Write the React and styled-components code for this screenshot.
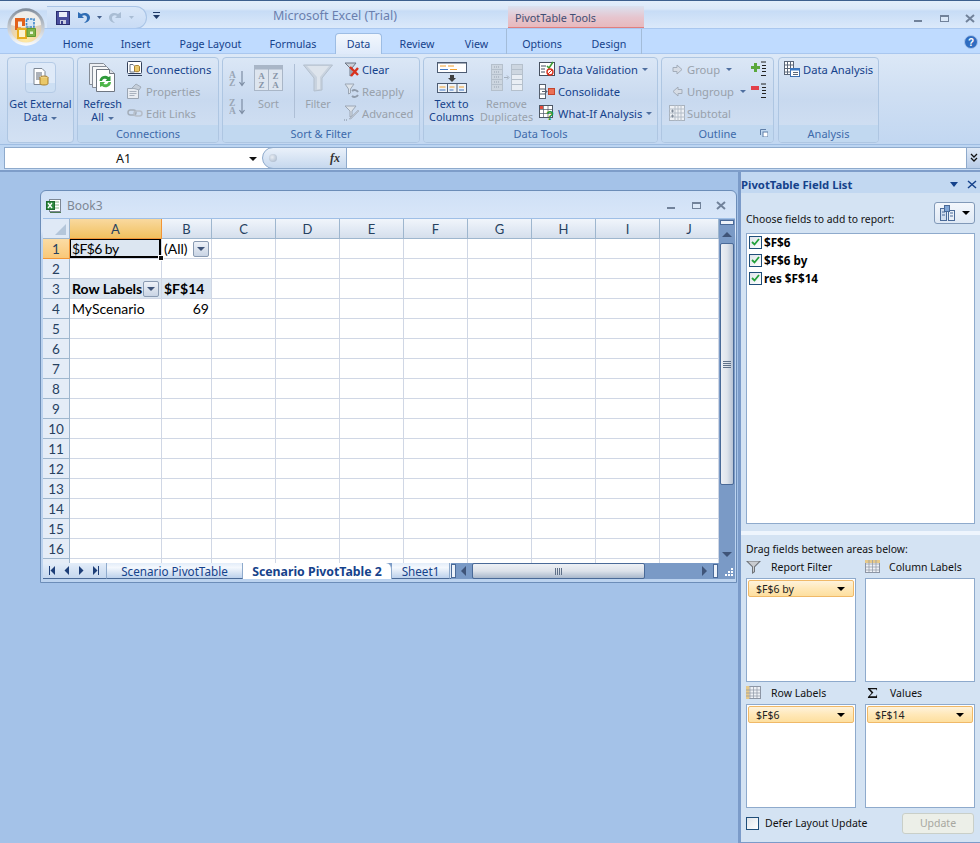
import React from "react";
import styled, { createGlobalStyle } from "styled-components";

const UI_FONT = `"Noto Sans", "Open Sans", sans-serif`;
const SHEET_FONT = `Lato, "Open Sans", sans-serif`;

const GlobalStyle = createGlobalStyle`
  html, body { margin: 0; padding: 0; height: 100%; overflow: hidden; }
  body { background: #a4c2e8; font-family: ${UI_FONT}; }
  * { box-sizing: border-box; }
`;

const Page = styled.div`
  width: 980px;
  height: 843px;
  position: relative;
  display: flex;
  flex-direction: column;
  overflow: hidden;
`;

/* title bar */
const TitleBar = styled.div`
  height: 28px;
  flex: none;
  display: flex;
  background: linear-gradient(#e3eefb 0, #dbe8f9 8px, #c7dcf6 10px, #dbe9fa 100%);
  border-top: 1px solid #3d5f8e;
`;
const Quick = styled.div`
  margin: 5px 0 0 47px;
  width: 100px;
  height: 23px;
  padding-left: 9px;
  display: flex;
  align-items: center;
  gap: 7px;
  border-radius: 0 12px 12px 0;
  background: linear-gradient(#d8e6f8, #c9dcf5);
  border: 1px solid #a9c4e6;
  border-left: none;
`;
const Customize = styled.div`
  margin: 11px 0 0 6px;
  width: 9px;
  height: 8px;
  display: flex;
`;
const AppTitle = styled.div`
  margin: 5px 0 0 111px;
  width: 235px;
  font-size: 12.5px;
  line-height: 20px;
  color: #6a7fae;
`;
const ContextTitle = styled.div`
  width: 136px;
  height: 23px;
  margin-top: 5px;
  padding: 4px 0 0 7px;
  font-size: 10.8px;
  line-height: 16px;
  color: #3f4f74;
  background: linear-gradient(#dbe2f0, #e6c5ce 55%, #e8b9bd);
  border-bottom: 2px solid #e07f7f;
`;
const WindowButtons = styled.div`
  margin-left: auto;
  padding: 12px 4px 0 0;
  display: flex;
  gap: 13px;
  align-items: flex-start;
`;

/* tabs */
const TabRow = styled.div`
  height: 26px;
  flex: none;
  display: flex;
  padding-left: 50px;
  background: #bfdbff;
  border-top: 1px solid #a9c7ef;
  border-bottom: 1px solid #a9c7ef;
  position: relative;
`;
const Tab = styled.div`
  width: ${(p) => p.$w}px;
  margin-left: ${(p) => p.$ml || 0}px;
  margin-bottom: -1px;
  text-align: center;
  font-size: 10.7px;
  line-height: 30px;
  color: #15428b;
  ${(p) => p.$active && `
    margin-top: 4px;
    line-height: 20px;
    background: linear-gradient(#f2f7fd, #dfeafa);
    border: 1px solid #9dbde4;
    border-bottom: none;
    border-radius: 4px 4px 0 0;
  `}
  ${(p) => p.$context && `
    border-left: ${p.$context === "l" ? "1px solid #a3bcd9" : "none"};
    border-right: ${p.$context === "r" ? "1px solid #a3bcd9" : "none"};
  `}
`;
const HelpSlot = styled.div`
  margin-left: auto;
  padding: 6px 2px 0 0;
  height: 20px;
  display: flex;
`;

/* ribbon */
const Ribbon = styled.div`
  height: 91px;
  flex: none;
  display: flex;
  padding: 3px 0 1px 6px;
  gap: 3px;
  background: linear-gradient(#dce8f7, #cfdff3 45%, #c2d7f1);
  border-bottom: 1px solid #9fbde2;
`;
const Group = styled.div`
  width: ${(p) => p.$w}px;
  margin-left: ${(p) => p.$ml || 0}px;
  display: flex;
  flex-direction: column;
  border: 1px solid #aec6e2;
  border-radius: 4px;
  overflow: hidden;
  background: linear-gradient(#dbe7f6, #c8d9ef 50%, #d3e1f3);
`;
const GroupBody = styled.div`
  flex: 1;
  display: flex;
  min-height: 0;
`;
const GroupLabel = styled.div`
  height: 17px;
  flex: none;
  position: relative;
  text-align: center;
  font-size: 11px;
  line-height: 18px;
  color: #3e6aaa;
  background: #c1d8f0;
`;
const Launcher = styled.span`
  position: absolute;
  right: 5px;
  top: 4px;
  display: flex;
`;
const BigButton = styled.div`
  width: ${(p) => p.$w}px;
  margin-left: ${(p) => p.$ml || 0}px;
  display: flex;
  flex-direction: column;
  align-items: center;
  font-size: 10.8px;
  line-height: 13px;
  text-align: center;
  white-space: nowrap;
  color: ${(p) => (p.$off ? "#98a1ab" : "#15428b")};
`;
const BigIcon = styled.div`
  height: 33px;
  margin-top: 3px;
  margin-bottom: 3px;
  display: flex;
  align-items: center;
  justify-content: center;
`;
const ExternalIcon = styled.div`
  width: 31px;
  height: 31px;
  margin: 4px 0 4px;
  display: flex;
  align-items: flex-start;
  justify-content: center;
  padding-top: 5px;
  border: 1px solid #b5cbe6;
  border-radius: 4px;
  background: linear-gradient(#dfeaf8 70%, #cddff3 70%);
`;
const SmallColumn = styled.div`
  margin-left: ${(p) => p.$ml || 0}px;
  ${(p) => p.$w && `width: ${p.$w}px;`}
  display: flex;
  flex-direction: column;
`;
const SmallButton = styled.div`
  height: 22px;
  flex: none;
  display: flex;
  align-items: center;
  gap: ${(p) => p.$gap ?? 3}px;
  font-size: 11.2px;
  white-space: nowrap;
  color: ${(p) => (p.$off ? "#98a1ab" : "#15428b")};
`;
const IconBox = styled.span`
  width: 16px;
  height: 16px;
  flex: none;
  display: flex;
  align-items: center;
  justify-content: center;
`;
const Caret = styled.span`
  display: inline-block;
  margin-left: ${(p) => p.$ml ?? 4}px;
  vertical-align: middle;
  border-left: 3px solid transparent;
  border-right: 3px solid transparent;
  border-top: 3px solid ${(p) => p.$color || "#4f6f9f"};
`;
const RibbonDivider = styled.div`
  width: 1px;
  height: 54px;
  margin: 6px 0 0 9px;
  background: #aebfd6;
`;
const SortColumn = styled.div`
  width: 23px;
  margin-left: 6px;
  padding-top: 12px;
  display: flex;
  flex-direction: column;
  gap: 11px;
`;

/* formula bar */
const FormulaStrip = styled.div`
  height: 27px;
  flex: none;
  padding: 2px 0 0 4px;
  background: linear-gradient(#bcd5f2, #c6dbf4);
  border-bottom: 2px solid #7e9dc9;
`;
const FormulaRow = styled.div`
  height: 22px;
  display: flex;
  background: #fff;
  border: 1px solid #8eaacc;
  border-right: none;
`;
const NameBox = styled.div`
  width: 257px;
  display: flex;
  align-items: center;
  position: relative;
  padding-left: 111px;
  font-size: 12.5px;
  color: #111;
`;
const NameArrow = styled.span`
  position: absolute;
  right: 5px;
  top: 9px;
  border-left: 4px solid transparent;
  border-right: 4px solid transparent;
  border-top: 4px solid #111;
`;
const FxBox = styled.div`
  width: 85px;
  margin-top: -1px;
  margin-bottom: -1px;
  display: flex;
  align-items: center;
  justify-content: flex-end;
  padding-right: 6px;
  border: 1px solid #8eaacc;
  border-radius: 11px 0 0 11px;
  background: linear-gradient(#eaf1fa, #c6d8ee);
  font-family: "Liberation Serif", serif;
  font-style: italic;
  font-weight: 700;
  font-size: 12px;
  color: #333;
  position: relative;
`;
const FxDot = styled.span`
  position: absolute;
  left: 6px;
  top: 6px;
  width: 8px;
  height: 8px;
  border-radius: 50%;
  background: radial-gradient(circle at 40% 40%, #e8edf3, #9fb0c6);
`;
const FormulaInput = styled.div`
  flex: 1;
`;
const ExpandButton = styled.div`
  width: 14px;
  display: flex;
  align-items: center;
  justify-content: center;
  background: linear-gradient(#dfe9f6, #b9cde8);
  border-left: 1px solid #8eaacc;
`;

/* workspace */
const Workspace = styled.div`
  flex: 1;
  display: flex;
  min-height: 0;
`;
const Desktop = styled.div`
  width: 738px;
  flex: none;
  padding: 18px 1px 0 40px;
  background: #a4c2e8;
`;
const BookWindow = styled.div`
  width: 697px;
  height: 393px;
  padding: 0 1px 3px 2px;
  display: flex;
  flex-direction: column;
  border: 1px solid #6c8db8;
  border-radius: 6px 6px 0 0;
  background: linear-gradient(#cfe0f6, #dde9f9 40px, #bcd3ef 50px);
`;
const BookTitle = styled.div`
  height: 27px;
  flex: none;
  display: flex;
  align-items: center;
  gap: 5px;
  padding: 2px 8px 0 3px;
  font-size: 12px;
  color: #7d8794;
`;
const BookButtons = styled.div`
  margin-left: auto;
  display: flex;
  gap: 12px;
  align-items: center;
`;
const BookBody = styled.div`
  flex: 1;
  display: flex;
  flex-direction: column;
  min-height: 0;
  background: #fff;
  border-top: 1px solid #9fbfe6;
`;
const BookMain = styled.div`
  flex: 1;
  display: flex;
  min-height: 0;
`;
const Sheet = styled.div`
  width: 676px;
  flex: none;
  height: 100%;
  overflow: hidden;
  display: grid;
  grid-template-columns: 27px 92px 50px repeat(7, 64px) 59px;
  grid-auto-rows: 20px;
`;
const Corner = styled.div`
  display: flex;
  align-items: flex-end;
  justify-content: flex-end;
  padding: 0 3px 3px 0;
  background: #dfe9f6;
  border: 1px solid #9eb6ce;
  border-width: 0 1px 1px 0;
`;
const ColHead = styled.div`
  display: flex;
  align-items: center;
  justify-content: center;
  font-family: ${SHEET_FONT};
  font-size: 13px;
  color: #27415f;
  background: ${(p) => (p.$on ? "linear-gradient(#f9d99f, #f1c15f)" : "linear-gradient(#f1f5fb, #e0e8f3 60%, #d5dfec)")};
  border-right: 1px solid ${(p) => (p.$on ? "#f29536" : "#9eb6ce")};
  border-bottom: 1px solid ${(p) => (p.$on ? "#f29536" : "#9eb6ce")};
`;
const RowHead = styled.div`
  display: flex;
  align-items: center;
  justify-content: center;
  font-family: ${SHEET_FONT};
  font-size: 13.5px;
  color: #27415f;
  background: ${(p) => (p.$on ? "linear-gradient(#fbdca5, #f9c878)" : "#e4ecf7")};
  border-right: 1px solid ${(p) => (p.$on ? "#f29536" : "#9eb6ce")};
  border-bottom: 1px solid ${(p) => (p.$on ? "#f29536" : "#9eb6ce")};
`;
const Cell = styled.div`
  position: relative;
  display: flex;
  align-items: center;
  justify-content: ${(p) => (p.$right ? "flex-end" : "space-between")};
  padding: 0 2px;
  font-family: ${SHEET_FONT};
  font-size: 14px;
  font-weight: ${(p) => (p.$bold ? 700 : 400)};
  color: #000;
  white-space: nowrap;
  background: ${(p) => (p.$fill ? "#dce6f1" : "#fff")};
  border-right: 1px solid #d0d7e5;
  border-bottom: 1px solid #d0d7e5;
  ${(p) => p.$selected && `
    letter-spacing: -0.6px;
    box-shadow: inset 0 0 0 1px #000, inset -1px -1px 0 1px #000;
    overflow: visible;
  `}
`;
const FillHandle = styled.span`
  position: absolute;
  right: -3px;
  bottom: -3px;
  width: 6px;
  height: 6px;
  background: #111;
  border: 1px solid #fff;
  z-index: 2;
`;
const PivotDrop = styled.span`
  width: 16px;
  height: 16px;
  margin-left: ${(p) => p.$ml || 0}px;
  flex: none;
  display: flex;
  align-items: center;
  justify-content: center;
  border: 1px solid #8a9bb2;
  border-radius: 2px;
  background: linear-gradient(#eef2f8, #c9d4e4);
`;
const DropCaret = styled.span`
  border-left: 4px solid transparent;
  border-right: 4px solid transparent;
  border-top: 4px solid #3f5478;
`;
const VScroll = styled.div`
  width: 16px;
  flex: none;
  display: flex;
  flex-direction: column;
  align-items: center;
  background: #7a9ac6;
`;
const SplitH = styled.div`
  width: 14px;
  height: 5px;
  margin-top: 1px;
  background: #eef3fa;
  border: 1px solid #4a6a98;
`;
const ArrowUp = styled.span`
  margin: 7px 0 6px;
  border-left: 5px solid transparent;
  border-right: 5px solid transparent;
  border-bottom: 5px solid #3f5478;
`;
const ArrowDown = styled.span`
  margin-top: auto;
  margin-bottom: 6px;
  border-left: 5px solid transparent;
  border-right: 5px solid transparent;
  border-top: 5px solid #3f5478;
`;
const VThumb = styled.div`
  width: 14px;
  height: 242px;
  display: flex;
  align-items: center;
  justify-content: center;
  border: 1px solid #4a6a98;
  border-radius: 2px;
  background: linear-gradient(90deg, #eceff4, #dfe4ec 50%, #b5c2d4);
`;
const VGrip = styled.span`
  width: 8px;
  height: 7px;
  background: repeating-linear-gradient(#5f7088 0 1px, transparent 1px 2px);
`;
const BottomBar = styled.div`
  height: 16px;
  flex: none;
  display: flex;
  align-items: stretch;
  background: #7a9ac6;
`;
const SheetNav = styled.div`
  width: 64px;
  flex: none;
  display: flex;
  align-items: center;
  justify-content: space-around;
  padding: 0 3px 0 2px;
  background: linear-gradient(#e3edf9, #c5d7ee);
  border-right: 1px solid #8eaacc;
  border-bottom: 1px solid #4a6a98;
`;
const SheetTab = styled.div`
  width: ${(p) => p.$w}px;
  flex: none;
  text-align: center;
  font-size: ${(p) => (p.$active ? 12.3 : 11.7)}px;
  line-height: ${(p) => (p.$active ? 18 : 16)}px;
  font-weight: ${(p) => (p.$active ? 700 : 400)};
  color: #15428b;
  white-space: nowrap;
  background: ${(p) => (p.$active ? "#fff" : "linear-gradient(#e3edf9, #f4f8fd 30%, #bcd1ec)")};
  border-right: 1px solid #8eaacc;
  border-bottom: ${(p) => (p.$active ? "none" : "1px solid #4a6a98")};
  ${(p) => p.$active && "border-radius: 0 6px 0 0;"}
`;
const TabSpacer = styled.div`
  width: 1px;
  flex: none;
  border-bottom: 1px solid #4a6a98;
  background: #dfe9f6;
`;
const SplitV = styled.div`
  width: 5px;
  flex: none;
  margin: 1px 0 1px;
  background: #eef3fa;
  border: 1px solid #4a6a98;
`;
const HArrow = styled.span`
  align-self: center;
  margin: ${(p) => p.$m};
  border-top: 5px solid transparent;
  border-bottom: 5px solid transparent;
  ${(p) => (p.$left ? "border-right: 5px solid #3f5478;" : "border-left: 5px solid #3f5478;")}
`;
const HThumb = styled.div`
  width: 173px;
  flex: none;
  display: flex;
  align-items: center;
  justify-content: center;
  border: 1px solid #4a6a98;
  border-radius: 2px;
  background: linear-gradient(#eef1f5, #dde2ea 50%, #a9b8cc);
`;
const HGrip = styled.span`
  width: 7px;
  height: 7px;
  background: repeating-linear-gradient(90deg, #5f7088 0 1px, transparent 1px 2px);
`;
const ResizeGrip = styled.div`
  width: 14px;
  flex: none;
  margin-left: 3px;
  display: flex;
  align-items: flex-end;
`;

/* field list */
const Panel = styled.div`
  flex: 1;
  display: flex;
  flex-direction: column;
  background: #d4e3f3;
  border-left: 3px solid #7b9bc9;
  border-bottom: 1px solid #7b9bc9;
`;
const PanelHeader = styled.div`
  height: 21px;
  flex: none;
  display: flex;
  align-items: center;
  justify-content: space-between;
  padding: 3px 3px 0 0;
  font-size: 11.3px;
  font-weight: 700;
  color: #15428b;
  background: #c2d8f1;
`;
const PanelHeaderIcons = styled.span`
  display: flex;
  align-items: center;
  gap: 9px;
`;
const PanelArrow = styled.span`
  border-left: 4px solid transparent;
  border-right: 4px solid transparent;
  border-top: 5px solid #15428b;
`;
const ChooseRow = styled.div`
  height: 22px;
  margin: 9px 6px 0 5px;
  display: flex;
  align-items: center;
  justify-content: space-between;
  font-size: 10.4px;
  color: #111;
`;
const ChooseText = styled.span`
  padding-top: 11px;
`;
const LayoutButton = styled.div`
  width: 41px;
  height: 22px;
  display: flex;
  align-items: center;
  justify-content: center;
  gap: 7px;
  border: 1px solid #8199b8;
  border-radius: 3px;
  background: linear-gradient(#f3f7fc, #dfe9f5);
`;
const BlackCaret = styled.span`
  flex: none;
  border-left: 4px solid transparent;
  border-right: 4px solid transparent;
  border-top: 4px solid #000;
`;
const FieldBox = styled.div`
  height: 291px;
  margin: 9px 6px 0 5px;
  padding: 0 2px;
  display: flex;
  flex-direction: column;
  gap: 2px;
  background: #fff;
  border: 1px solid #8eaacc;
`;
const FieldRow = styled.div`
  height: 16px;
  flex: none;
  display: flex;
  align-items: center;
  gap: 2px;
  font-size: 11.7px;
  font-weight: 700;
  color: #000;
`;
const CheckBox = styled.span`
  width: 13px;
  height: 13px;
  flex: none;
  display: flex;
  align-items: center;
  justify-content: center;
  background: linear-gradient(135deg, #dfe4ea, #fff);
  border: 1px solid #1f4e79;
`;
const Splitter = styled.div`
  height: 4px;
  margin-top: 7px;
  background: #eef5fd;
`;
const DragText = styled.div`
  margin: 7px 0 0 5px;
  height: 16px;
  font-size: 10.4px;
  line-height: 15px;
  color: #111;
`;
const Areas = styled.div`
  margin: 0 6px 0 5px;
  display: grid;
  grid-template-columns: 110px 110px;
  column-gap: 9px;
`;
const AreaLabel = styled.div`
  height: 20px;
  padding-bottom: 3px;
  display: flex;
  align-items: center;
  gap: ${(p) => p.$gap}px;
  font-size: 10.5px;
  color: #111;
`;
const AreaIcon = styled.span`
  width: 15px;
  flex: none;
  display: flex;
  justify-content: center;
`;
const AreaBox = styled.div`
  height: 104px;
  padding: 1px 1px;
  margin-bottom: 2px;
  background: #fff;
  border: 1px solid #8eaacc;
`;
const Pill = styled.div`
  height: 17px;
  display: flex;
  align-items: center;
  justify-content: space-between;
  padding: 0 8px 0 7px;
  font-size: 10.5px;
  color: #222;
  background: linear-gradient(#fef3dc, #ffe8b8 50%, #fddf9f);
  border: 1px solid #f0b968;
  border-radius: 2px;
`;
const PanelFooter = styled.div`
  margin: 1px 7px 0 5px;
  display: flex;
  align-items: center;
  justify-content: space-between;
  height: 24px;
`;
const DeferLabel = styled.label`
  display: flex;
  align-items: center;
  gap: 6px;
  font-size: 10.5px;
  color: #111;
`;
const DeferBox = styled.span`
  width: 13px;
  height: 13px;
  background: linear-gradient(135deg, #dfe4ea, #fff);
  border: 1px solid #1f4e79;
`;
const UpdateButton = styled.div`
  width: 72px;
  height: 21px;
  text-align: center;
  font-size: 10.5px;
  line-height: 19px;
  color: #a7a7a0;
  background: #ecefe8;
  border: 1px solid #c9cfc8;
  border-radius: 3px;
`;

/* drawings */
const Orb = styled.div`
  position: absolute;
  left: 7px;
  top: 8px;
  width: 38px;
  height: 38px;
  z-index: 5;
`;
const OfficeOrb = () => (
  <svg width="38" height="38" viewBox="0 0 38 38">
    <defs>
      <radialGradient id="orbGlow" cx="50%" cy="90%" r="65%">
        <stop offset="0" stopColor="#ffe9a0" />
        <stop offset="0.55" stopColor="#f3d9a8" />
        <stop offset="1" stopColor="#d5cdc2" />
      </radialGradient>
      <linearGradient id="orbRing" x1="0" y1="0" x2="0" y2="1">
        <stop offset="0" stopColor="#7f8b9a" />
        <stop offset="0.5" stopColor="#c3c9d0" />
        <stop offset="1" stopColor="#fbfcfd" />
      </linearGradient>
    </defs>
    <circle cx="19" cy="19" r="18.700" fill="url(#orbRing)" />
    <circle cx="19" cy="19" r="15.500" fill="url(#orbGlow)" />
    <path d="M4 17a15 14 0 0 1 30 0c-8 2.500-22 2.500-30 0z" fill="#fff" opacity="0.65" />
    <path d="M8 10h10v8h-3v-4.500h-4v6h3v2.500H8z" fill="#e2611a" />
    <path d="M19.500 11h7.500v8h-7.500z" fill="#d8e6f4" stroke="#3f86c8" strokeWidth="1.600" strokeDasharray="2.500 1" />
    <path d="M11 21h8v9h-8z" fill="#fdf3cf" stroke="#e8ad22" strokeWidth="2" />
    <path d="M20 20.500h8.500v8H20z" fill="#7fb24a" stroke="#5f9a2f" />
    <path d="M23 23.500h3v2.500h-3z" fill="#eaf4d8" />
  </svg>
);
const SaveIcon = () => (
  <svg width="14" height="14" viewBox="0 0 14 14">
    <rect x="0.500" y="0.500" width="13" height="13" fill="#4a4f9e" stroke="#2a2d6e" />
    <rect x="3" y="1" width="8" height="5" fill="#e9edf8" />
    <rect x="4" y="9" width="6" height="4" fill="#c8cce0" />
    <rect x="5" y="10" width="2" height="3" fill="#3a3f8a" />
  </svg>
);
const UndoIcon = ({ c = "#2f6db5", flip }) => (
  <svg width="13" height="13" viewBox="0 0 13 13" style={flip ? { transform: "scaleX(-1)" } : undefined}>
    <path d="M1 1v6h6L5 5c2-1.500 5-.5 5 2 0 2-1 3.500-3 5 4-.5 6-3 6-5.500C13 2.500 8 .5 4 3z" fill={c} />
  </svg>
);
const MiniCaret = ({ c = "#44608c" }) => (
  <svg width="5" height="3" viewBox="0 0 5 3"><path d="M0 0h5L2.500 3z" fill={c} /></svg>
);
const CustomizeIcon = () => (
  <svg width="7" height="8" viewBox="0 0 7 8">
    <path d="M0 0h7v1H0zM0 3h7L3.500 7z" fill="#1e3a68" />
  </svg>
);
const WinMin = ({ c = "#71829a" }) => (
  <svg width="13" height="11" viewBox="0 0 13 11"><rect x="1" y="7" width="8" height="2" fill={c} /></svg>
);
const WinMax = ({ c = "#71829a" }) => (
  <svg width="13" height="11" viewBox="0 0 13 11">
    <rect x="1.500" y="2.500" width="8" height="6" fill="#dbe8f8" stroke={c} />
    <rect x="1" y="2" width="9" height="2" fill={c} />
  </svg>
);
const WinClose = ({ c = "#71829a", w = 2 }) => (
  <svg width="11" height="11" viewBox="0 0 11 11">
    <path d="M1 2l8 7M9 2L1 9" stroke={c} strokeWidth={w} />
  </svg>
);
const HelpIcon = () => (
  <svg width="14" height="14" viewBox="0 0 14 14">
    <circle cx="7" cy="7" r="6.500" fill="#2f6cc0" stroke="#a8c4ec" />
    <text x="7" y="10.500" textAnchor="middle" fontSize="10" fontWeight="700" fill="#fff" fontFamily="Liberation Sans">?</text>
  </svg>
);
const ExternalData = () => (
  <svg width="16" height="18" viewBox="0 0 16 18">
    <path d="M1 .5h8l3 3v13H1z" fill="#fff" stroke="#7d8794" />
    <path d="M3 5h6M3 7h6M3 9h4M3 11h4" stroke="#5a6472" />
    <ellipse cx="11" cy="9.500" rx="4" ry="1.500" fill="#f3dc9d" stroke="#a77e2d" />
    <path d="M7 9.500v6c0 2 8 2 8 0v-6" fill="#eac868" stroke="#a77e2d" />
  </svg>
);
const RefreshIcon = () => (
  <svg width="27" height="29" viewBox="0 0 27 29">
    <path d="M.5.5h14l3 3v18H.5z" fill="#eef0f3" stroke="#858c96" />
    <path d="M3.500 3.500h14l3 3v18h-17z" fill="#f6f7f8" stroke="#858c96" />
    <path d="M7.500 6.500h13l5 4v18h-18z" fill="#fff" stroke="#6f7681" />
    <path d="M20.500 6.500v4h5" fill="#dfe3e8" stroke="#6f7681" />
    <path d="M10.500 18a5.500 5.500 0 0 1 9-4l2-1v5h-5l1.500-1.700a3.200 3.200 0 0 0-5 1.700z" fill="#2f9a3a" />
    <path d="M22 19a5.500 5.500 0 0 1-9 4l-2 1v-5h5l-1.500 1.700a3.200 3.200 0 0 0 5-1.700z" fill="#4cb648" />
  </svg>
);
const ConnectionsIcon = () => (
  <svg width="16" height="16" viewBox="0 0 16 16">
    <rect x="0.500" y="0.500" width="14" height="12" rx="1" fill="#fff" stroke="#33415a" />
    <path d="M3 3.500h3l1.500 1.500v6H3z" fill="#fff" stroke="#6b7685" />
    <ellipse cx="10" cy="5.500" rx="2.500" ry="1" fill="#f3dc9d" stroke="#a77e2d" />
    <path d="M7.500 5.500v4.500c0 1 5 1 5 0V5.500" fill="#eac868" stroke="#a77e2d" />
    <path d="M1 14.500h14" stroke="#33415a" />
  </svg>
);
const PropertiesIcon = () => (
  <svg width="16" height="16" viewBox="0 0 16 16">
    <path d="M.5 5.500h11v10H.5z" fill="#e8ecf2" stroke="#9aa5b3" />
    <path d="M2.500 8.500h7M2.500 10.500h7M2.500 12.500h5" stroke="#a9b2bf" />
    <path d="M5 5l4-4 5 3-2 3-3-1z" fill="#c5ced9" stroke="#a2adba" />
  </svg>
);
const LinksIcon = () => (
  <svg width="16" height="10" viewBox="0 0 16 10">
    <rect x="1" y="2" width="8" height="5" rx="2.500" fill="none" stroke="#a4aeba" strokeWidth="1.500" />
    <rect x="7" y="3" width="8" height="5" rx="2.500" fill="none" stroke="#b6bec9" strokeWidth="1.500" />
  </svg>
);
const SortLetters = ({ top, bottom }) => (
  <svg width="17" height="17" viewBox="0 0 17 17">
    <text x="0" y="8" fontSize="9.500" fontWeight="700" fill="#9aa6b6" fontFamily="Liberation Serif">{top}</text>
    <text x="0" y="16" fontSize="9.500" fontWeight="700" fill="#9aa6b6" fontFamily="Liberation Serif">{bottom}</text>
    <path d="M13 1v14M10.500 12l2.500 3.500 2.500-3.500" fill="none" stroke="#7d8da3" strokeWidth="1.200" />
  </svg>
);
const SortIcon = () => (
  <svg width="29" height="26" viewBox="0 0 29 26">
    <rect x="0.500" y="0.500" width="28" height="25" fill="#dde5ef" stroke="#a9b6c7" />
    <rect x="0.500" y="0.500" width="28" height="4" fill="#a9b6c7" />
    <path d="M14.500 4v22" stroke="#a9b6c7" />
    <text x="7.500" y="14" fontSize="9" fontWeight="700" textAnchor="middle" fill="#8795a8" fontFamily="Liberation Serif">A</text>
    <text x="7.500" y="23" fontSize="9" fontWeight="700" textAnchor="middle" fill="#8795a8" fontFamily="Liberation Serif">Z</text>
    <text x="21.500" y="14" fontSize="9" fontWeight="700" textAnchor="middle" fill="#8795a8" fontFamily="Liberation Serif">Z</text>
    <text x="21.500" y="23" fontSize="9" fontWeight="700" textAnchor="middle" fill="#8795a8" fontFamily="Liberation Serif">A</text>
  </svg>
);
const FunnelIcon = () => (
  <svg width="30" height="28" viewBox="0 0 30 28">
    <path d="M.5 1h29L19 14v12l-8 1V14z" fill="#c9d3df" stroke="#b3bfcd" />
    <path d="M4 2h22l-9 11v12l-3 .5V13z" fill="#dde4ec" />
  </svg>
);
const ClearIcon = () => (
  <svg width="16" height="15" viewBox="0 0 16 15">
    <path d="M1 1h11L8 6v7l-2 1V6z" fill="#c9cfd8" stroke="#6d7786" />
    <path d="M6 5l8 8M14 6l-7 8" stroke="#d8321e" strokeWidth="2.400" />
  </svg>
);
const ReapplyIcon = () => (
  <svg width="16" height="16" viewBox="0 0 16 16">
    <path d="M1 1h9L6.500 6v4L4.500 11V6z" fill="#dde3ea" stroke="#9ca7b5" />
    <path d="M8 8a4 4 0 0 1 6 1M14 12a4 4 0 0 1-6 1" fill="none" stroke="#8f9bab" strokeWidth="2" />
  </svg>
);
const AdvancedIcon = () => (
  <svg width="16" height="16" viewBox="0 0 16 16">
    <path d="M1 1h11L8 6v5l-2 1V6z" fill="#dde3ea" stroke="#9ca7b5" />
    <path d="M5 14l9-9 1 1-8 8z" fill="#b9c2ce" stroke="#9ca7b5" strokeWidth="0.500" />
    <path d="M0 15h4" stroke="#7f8a99" strokeDasharray="1 1" />
  </svg>
);
const TextColumnsIcon = () => (
  <svg width="30" height="31" viewBox="0 0 30 31">
    <rect x="0.500" y="0.500" width="29" height="10" fill="#fff" stroke="#4d5c73" />
    <path d="M0 0.500h30" stroke="#4d5c73" strokeWidth="2" />
    <path d="M3 4h6M11 4h6" stroke="#f0a030" />
    <path d="M3 7.500h8" stroke="#3f77c4" />
    <path d="M13 7.500h7" stroke="#f0a030" />
    <path d="M13 13h4v3h2l-4 4-4-4h2z" fill="#3f3f3f" />
    <rect x="0.500" y="21.500" width="29" height="9" fill="#eef3f9" stroke="#4d5c73" />
    <path d="M10.500 21v10M20 21v10" stroke="#4d5c73" />
    <path d="M2.500 25h6M12.500 25h5M22 25h5" stroke="#f0a030" />
    <path d="M2.500 28h6M12.500 28h4M22 28h5" stroke="#3f77c4" />
  </svg>
);
const RemoveDupIcon = () => (
  <svg width="32" height="27" viewBox="0 0 32 27">
    <rect x="0.500" y="0.500" width="11" height="26" fill="#cdd6e0" stroke="#b5c0cc" />
    <path d="M0 5.500h12M0 10.500h12M0 15.500h12M0 20.500h12" stroke="#b5c0cc" />
    <path d="M3 3h6M3 8h6M3 13h6M3 18h6M3 23h6" stroke="#98a3b1" strokeDasharray="1 1" />
    <path d="M13 13.500h4M16 11.500l2 2-2 2" stroke="#a3afbd" fill="none" />
    <rect x="20.500" y="0.500" width="11" height="26" fill="#e9eef4" stroke="#b5c0cc" />
    <rect x="20.500" y="0.500" width="11" height="10" fill="#cdd6e0" stroke="#b5c0cc" />
    <path d="M20 5.500h12M20 15.500h12M20 20.500h12" stroke="#b5c0cc" />
  </svg>
);
const ValidationIcon = () => (
  <svg width="16" height="16" viewBox="0 0 16 16">
    <rect x="0.500" y="1.500" width="15" height="13" fill="#fff" stroke="#454f5e" />
    <path d="M2 5h5M2 8h4M2 11h4" stroke="#454f5e" />
    <path d="M8 5l2 2 4-6" fill="none" stroke="#3b9a33" strokeWidth="1.500" />
    <circle cx="11" cy="11" r="3" fill="#fff" stroke="#d8321e" strokeWidth="1.400" />
    <path d="M9 13l4-4" stroke="#d8321e" />
  </svg>
);
const ConsolidateIcon = () => (
  <svg width="16" height="15" viewBox="0 0 16 15">
    <rect x="0.500" y="0.500" width="6" height="14" fill="#fff" stroke="#55606f" />
    <path d="M1 5h5M1 10h5" stroke="#55606f" />
    <path d="M3 7.500h5M6 5.500l2 2-2 2" fill="none" stroke="#55606f" />
    <rect x="9.500" y="4.500" width="6" height="6" fill="#ea6f55" stroke="#c4452e" />
  </svg>
);
const WhatIfIcon = () => (
  <svg width="16" height="16" viewBox="0 0 16 16" overflow="visible">
    <rect x="0.500" y="0.500" width="13" height="12" fill="#fff" stroke="#4d5866" />
    <path d="M0 4.500h14M0 8.500h14M4.500 0v13M9 0v13" stroke="#4d5866" strokeWidth="0.700" />
    <rect x="1" y="1" width="3" height="3" fill="#e44a3c" />
    <text x="11" y="15" textAnchor="middle" fontSize="13" fontWeight="700" fill="#1f9a36" fontFamily="Liberation Sans">?</text>
  </svg>
);
const GroupArrow = ({ left }) => (
  <svg width="11" height="11" viewBox="0 0 11 11" style={left ? { transform: "scaleX(-1)" } : undefined}>
    <path d="M1 3.500h4V1l5 4.500L5 10V7.500H1z" fill="#d6dce5" stroke="#a3adba" />
  </svg>
);
const OutlineMark = ({ plus }) => (
  <svg width="16" height="16" viewBox="0 0 16 16">
    <path d="M10 1h5M11 4.500h4M11 7.500h4M11 10.500h4M10 14.500h5" stroke="#222" />
    {plus ? (
      <path d="M3 2h3v3h3v3H6v3H3V8H0V5h3z" fill="#5aa83c" />
    ) : (
      <rect x="0" y="3" width="8" height="4" fill="#e2404a" />
    )}
  </svg>
);
const SubtotalIcon = () => (
  <svg width="16" height="16" viewBox="0 0 16 16">
    <rect x="0.500" y="0.500" width="15" height="15" fill="#eef1f5" stroke="#a8b2be" />
    <path d="M6 0v16M9 0v16M12 0v16M0 4h16M0 8h16M0 12h16" stroke="#b4bdc8" />
    <path d="M2 6h3M3.500 4.500v3M2 11h3M3.500 9.500v3" stroke="#7f8a98" />
  </svg>
);
const AnalysisIcon = () => (
  <svg width="16" height="16" viewBox="0 0 16 16">
    <rect x="0.500" y="0.500" width="9" height="13" fill="#fff" stroke="#5a6678" />
    <path d="M3.500 0v14M6.500 0v14M0 4h10M0 7.500h10M0 11h10" stroke="#5a6678" />
    <rect x="6.500" y="7.500" width="9" height="8" fill="#fff" stroke="#3c6fb0" />
    <rect x="6.500" y="7.500" width="9" height="2" fill="#3c7cc8" />
    <path d="M9 11.500h5M9 13.500h5" stroke="#5a6678" />
  </svg>
);
const LauncherIcon = () => (
  <svg width="8" height="8" viewBox="0 0 8 8">
    <path d="M.5 6V.5H6" fill="none" stroke="#5f7ea8" />
    <rect x="3" y="3" width="5" height="5" fill="#fff" stroke="#5f7ea8" />
  </svg>
);
const Nav = ({ dir, bar }) => (
  <svg width="7" height="9" viewBox="0 0 7 9" style={dir === "l" ? undefined : { transform: "scaleX(-1)" }}>
    <path d="M6 0v9L1.500 4.500z" fill="#1e3f78" />
    {bar && <rect x="0" y="0" width="1" height="9" fill="#1e3f78" />}
  </svg>
);
const BookIcon = () => (
  <svg width="16" height="16" viewBox="0 0 16 16">
    <rect x="3.500" y="1.500" width="11" height="12" fill="#fff" stroke="#7d8794" />
    <path d="M7 4h6M7 7h6M7 10h6" stroke="#8bb98b" />
    <rect x="0.500" y="3.500" width="8" height="8" fill="#2f8a3f" stroke="#1f6a2f" />
    <path d="M2 5l4 5M6 5l-4 5" stroke="#fff" strokeWidth="1.300" />
    <path d="M4 14.500h11" stroke="#4b7a52" />
  </svg>
);
const CheckMark = () => (
  <svg width="9" height="8" viewBox="0 0 9 8">
    <path d="M1 4l2.500 2.500L8 1" fill="none" stroke="#23a03a" strokeWidth="1.800" />
  </svg>
);
const LayoutIcon = () => (
  <svg width="15" height="16" viewBox="0 0 15 16">
    <rect x="0.500" y="3.500" width="6" height="12" fill="#cfdcee" stroke="#4a6a98" />
    <rect x="8.500" y="5.500" width="6" height="10" fill="#e8eff8" stroke="#4a6a98" />
    <rect x="4.500" y="0.500" width="5" height="6" fill="#7fa5d6" stroke="#4a6a98" />
    <path d="M2 7h3M2 10h3M10 8h3M10 11h3" stroke="#4a6a98" />
  </svg>
);
const AreaFilterIcon = () => (
  <svg width="15" height="14" viewBox="0 0 15 14">
    <path d="M0 1h15L9 7v5l-3 2V7z" fill="#6f7378" />
    <path d="M2 1.500h11L8 6.500v5l-1 .5V6.500z" fill="#c9ccd0" />
  </svg>
);
const AreaGridIcon = () => (
  <svg width="15" height="13" viewBox="0 0 15 13">
    <rect x="0.500" y="0.500" width="14" height="12" fill="#eef1f6" stroke="#8d96a5" />
    <rect x="0" y="0" width="15" height="3" fill="#e6c98a" />
    <path d="M4 0v13M7.500 0v13M11 0v13M0 4h15M0 7h15M0 10h15" stroke="#8d96a5" strokeWidth="0.700" />
  </svg>
);
const AreaRowIcon = () => (
  <svg width="15" height="13" viewBox="0 0 15 13">
    <rect x="0.500" y="0.500" width="14" height="12" fill="#eef1f6" stroke="#8d96a5" />
    <rect x="0" y="0" width="3.500" height="13" fill="#e6c98a" />
    <path d="M4 0v13M7.500 0v13M11 0v13M0 4h15M0 7h15M0 10h15" stroke="#8d96a5" strokeWidth="0.700" />
  </svg>
);
const SigmaIcon = () => (
  <svg width="11" height="10" viewBox="0 0 12 11">
    <path d="M1 0h10v3l-1-1.500H3.500L7 5 3 9h7l1-2v4H1v-1l4-4.500L1 1z" fill="#111" />
  </svg>
);
const ChevronDouble = () => (
  <svg width="8" height="11" viewBox="0 0 8 11">
    <path d="M1 1l3 3 3-3M1 5l3 3 3-3" fill="none" stroke="#111" strokeWidth="1.300" />
  </svg>
);
const GripDots = () => (
  <svg width="14" height="14" viewBox="0 0 14 14">
    <path d="M10 3h2v2h-2zM7 6h2v2H7zM10 6h2v2h-2zM4 9h2v2H4zM7 9h2v2H7zM10 9h2v2h-2z" fill="#fff" />
  </svg>
);
const CornerTriangle = () => (
  <svg width="11" height="11" viewBox="0 0 11 11"><path d="M11 0v11H0z" fill="#b4c6da" /></svg>
);

const TABS = [
  ["Home", 56], ["Insert", 59], ["Page Layout", 91], ["Formulas", 74],
];
const COLS = ["A", "B", "C", "D", "E", "F", "G", "H", "I", "J"];
const ROWS = Array.from({ length: 17 }, (_, i) => i + 1);

const cellContent = (row, col) => {
  const key = `${col}${row}`;
  if (key === "A1") return { text: "$F$6 by", selected: true, fill: true };
  if (key === "B1") return { text: "(All)", drop: true };
  if (key === "A3") return { text: "Row Labels", bold: true, fill: true, drop: true };
  if (key === "B3") return { text: "$F$14", bold: true, fill: true };
  if (key === "A4") return { text: "MyScenario" };
  if (key === "B4") return { text: "69", right: true };
  return {};
};

function SheetGrid() {
  return (
    <Sheet>
      <Corner><CornerTriangle /></Corner>
      {COLS.map((c) => <ColHead key={c} $on={c === "A"}>{c}</ColHead>)}
      {ROWS.map((row) => (
        <React.Fragment key={row}>
          <RowHead $on={row === 1}>{row < 17 ? row : ""}</RowHead>
          {COLS.map((col) => {
            const c = cellContent(row, col);
            return (
              <Cell key={col} $bold={c.bold} $fill={c.fill} $right={c.right} $selected={c.selected}>
                {c.text}
                {c.drop && <PivotDrop><DropCaret /></PivotDrop>}
                {c.selected && <FillHandle />}
              </Cell>
            );
          })}
        </React.Fragment>
      ))}
    </Sheet>
  );
}

function RibbonBar() {
  return (
    <Ribbon>
      <Group $w={67} $ml={1}>
        <GroupBody>
          <BigButton $w={65}>
            <ExternalIcon><ExternalData /></ExternalIcon>
            Get External
            <span>Data<Caret /></span>
          </BigButton>
        </GroupBody>
      </Group>
      <Group $w={142}>
        <GroupBody>
          <BigButton $w={49}>
            <BigIcon><RefreshIcon /></BigIcon>
            Refresh
            <span>All<Caret /></span>
          </BigButton>
          <SmallColumn>
            <SmallButton><IconBox><ConnectionsIcon /></IconBox>Connections</SmallButton>
            <SmallButton $off><IconBox><PropertiesIcon /></IconBox>Properties</SmallButton>
            <SmallButton $off><IconBox><LinksIcon /></IconBox>Edit Links</SmallButton>
          </SmallColumn>
        </GroupBody>
        <GroupLabel>Connections</GroupLabel>
      </Group>
      <Group $w={198}>
        <GroupBody>
          <SortColumn>
            <SortLetters top="A" bottom="Z" />
            <SortLetters top="Z" bottom="A" />
          </SortColumn>
          <BigButton $w={33} $off>
            <BigIcon><SortIcon /></BigIcon>
            Sort
          </BigButton>
          <RibbonDivider />
          <BigButton $w={46} $off>
            <BigIcon><FunnelIcon /></BigIcon>
            Filter
          </BigButton>
          <SmallColumn $ml={3}>
            <SmallButton $gap={2}><IconBox><ClearIcon /></IconBox>Clear</SmallButton>
            <SmallButton $gap={2} $off><IconBox><ReapplyIcon /></IconBox>Reapply</SmallButton>
            <SmallButton $gap={2} $off><IconBox><AdvancedIcon /></IconBox>Advanced</SmallButton>
          </SmallColumn>
        </GroupBody>
        <GroupLabel>Sort &amp; Filter</GroupLabel>
      </Group>
      <Group $w={235}>
        <GroupBody>
          <BigButton $w={55}>
            <BigIcon><TextColumnsIcon /></BigIcon>
            Text to
            <span>Columns</span>
          </BigButton>
          <BigButton $w={55} $off>
            <BigIcon><RemoveDupIcon /></BigIcon>
            Remove
            <span>Duplicates</span>
          </BigButton>
          <SmallColumn $ml={5}>
            <SmallButton><IconBox><ValidationIcon /></IconBox>Data Validation<Caret $ml={1} /></SmallButton>
            <SmallButton><IconBox><ConsolidateIcon /></IconBox>Consolidate</SmallButton>
            <SmallButton><IconBox><WhatIfIcon /></IconBox>What-If Analysis<Caret $ml={1} /></SmallButton>
          </SmallColumn>
        </GroupBody>
        <GroupLabel>Data Tools</GroupLabel>
      </Group>
      <Group $w={113}>
        <GroupBody>
          <SmallColumn $ml={7} $w={74}>
            <SmallButton $gap={2} $off><IconBox><GroupArrow /></IconBox>Group<Caret $ml={4} /></SmallButton>
            <SmallButton $gap={2} $off><IconBox><GroupArrow left /></IconBox>Ungroup<Caret $ml={4} /></SmallButton>
            <SmallButton $gap={2} $off><IconBox><SubtotalIcon /></IconBox>Subtotal</SmallButton>
          </SmallColumn>
          <SmallColumn $ml={8}>
            <SmallButton><IconBox><OutlineMark plus /></IconBox></SmallButton>
            <SmallButton><IconBox><OutlineMark /></IconBox></SmallButton>
          </SmallColumn>
        </GroupBody>
        <GroupLabel>Outline<Launcher><LauncherIcon /></Launcher></GroupLabel>
      </Group>
      <Group $w={101} $ml={1}>
        <GroupBody>
          <SmallColumn $ml={5}>
            <SmallButton><IconBox><AnalysisIcon /></IconBox>Data Analysis</SmallButton>
          </SmallColumn>
        </GroupBody>
        <GroupLabel>Analysis</GroupLabel>
      </Group>
    </Ribbon>
  );
}

function FieldList() {
  return (
    <Panel>
      <PanelHeader>
        PivotTable Field List
        <PanelHeaderIcons>
          <PanelArrow />
          <WinClose c="#15428b" w={1.5} />
        </PanelHeaderIcons>
      </PanelHeader>
      <ChooseRow>
        <ChooseText>Choose fields to add to report:</ChooseText>
        <LayoutButton><LayoutIcon /><BlackCaret /></LayoutButton>
      </ChooseRow>
      <FieldBox>
        {["$F$6", "$F$6 by", "res $F$14"].map((f) => (
          <FieldRow key={f}><CheckBox><CheckMark /></CheckBox>{f}</FieldRow>
        ))}
      </FieldBox>
      <Splitter />
      <DragText>Drag fields between areas below:</DragText>
      <Areas>
        <AreaLabel $gap={10}><AreaIcon><AreaFilterIcon /></AreaIcon>Report Filter</AreaLabel>
        <AreaLabel $gap={9}><AreaIcon><AreaGridIcon /></AreaIcon>Column Labels</AreaLabel>
        <AreaBox><Pill>$F$6 by<BlackCaret /></Pill></AreaBox>
        <AreaBox />
        <AreaLabel $gap={10}><AreaIcon><AreaRowIcon /></AreaIcon>Row Labels</AreaLabel>
        <AreaLabel $gap={10}><AreaIcon><SigmaIcon /></AreaIcon>Values</AreaLabel>
        <AreaBox><Pill>$F$6<BlackCaret /></Pill></AreaBox>
        <AreaBox><Pill>$F$14<BlackCaret /></Pill></AreaBox>
      </Areas>
      <PanelFooter>
        <DeferLabel><DeferBox />Defer Layout Update</DeferLabel>
        <UpdateButton>Update</UpdateButton>
      </PanelFooter>
    </Panel>
  );
}

export default function App() {
  return (
    <Page>
      <GlobalStyle />
      <Orb><OfficeOrb /></Orb>
      <TitleBar>
        <Quick>
          <SaveIcon />
          <UndoIcon />
          <MiniCaret />
          <UndoIcon c="#a9bdd4" flip />
          <MiniCaret c="#a9bdd4" />
        </Quick>
        <Customize><CustomizeIcon /></Customize>
        <AppTitle>Microsoft Excel (Trial)</AppTitle>
        <ContextTitle>PivotTable Tools</ContextTitle>
        <WindowButtons>
          <WinMin />
          <WinMax />
          <WinClose />
        </WindowButtons>
      </TitleBar>
      <TabRow>
        {TABS.map(([label, w]) => <Tab key={label} $w={w}>{label}</Tab>)}
        <Tab $w={47} $ml={5} $active>Data</Tab>
        <Tab $w={70}>Review</Tab>
        <Tab $w={49}>View</Tab>
        <Tab $w={71} $ml={5} $context="l">Options</Tab>
        <Tab $w={65} $context="r">Design</Tab>
        <HelpSlot><HelpIcon /></HelpSlot>
      </TabRow>
      <RibbonBar />
      <FormulaStrip>
        <FormulaRow>
          <NameBox>A1<NameArrow /></NameBox>
          <FxBox><FxDot />fx</FxBox>
          <FormulaInput />
          <ExpandButton><ChevronDouble /></ExpandButton>
        </FormulaRow>
      </FormulaStrip>
      <Workspace>
        <Desktop>
          <BookWindow>
            <BookTitle>
              <BookIcon />
              Book3
              <BookButtons>
                <WinMin />
                <WinMax />
                <WinClose />
              </BookButtons>
            </BookTitle>
            <BookBody>
              <BookMain>
                <SheetGrid />
                <VScroll>
                  <SplitH />
                  <ArrowUp />
                  <VThumb><VGrip /></VThumb>
                  <ArrowDown />
                </VScroll>
              </BookMain>
              <BottomBar>
                <SheetNav>
                  <Nav dir="l" bar />
                  <Nav dir="l" />
                  <Nav dir="r" />
                  <Nav dir="r" bar />
                </SheetNav>
                <SheetTab $w={136}>Scenario PivotTable</SheetTab>
                <SheetTab $w={149} $active>Scenario PivotTable 2</SheetTab>
                <SheetTab $w={58}>Sheet1</SheetTab>
                <TabSpacer />
                <SplitV />
                <HArrow $left $m="0 6px 0 5px" />
                <HThumb><HGrip /></HThumb>
                <HArrow $m="0 6px 0 auto" />
                <SplitV />
                <ResizeGrip><GripDots /></ResizeGrip>
              </BottomBar>
            </BookBody>
          </BookWindow>
        </Desktop>
        <FieldList />
      </Workspace>
    </Page>
  );
}
